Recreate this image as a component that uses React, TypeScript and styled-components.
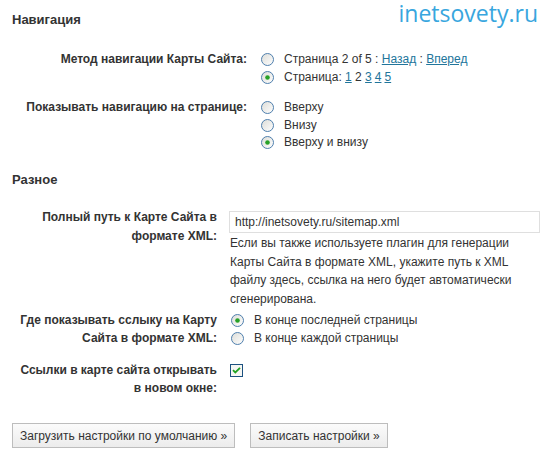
import React from "react";
import styled, { createGlobalStyle } from "styled-components";

const GlobalStyle = createGlobalStyle`
  html, body { margin: 0; padding: 0; background: #fff; }
  body {
    font-family: "Liberation Sans", Arial, sans-serif;
    font-size: 12px;
    color: #333;
  }
`;

const Page = styled.div`
  position: relative;
  width: 541px;
  height: 455px;
  overflow: hidden;
  box-sizing: border-box;
  padding: 12px 0 0 12px;
`;

const Logo = styled.div`
  position: absolute;
  top: 0;
  right: 3px;
  font-family: "Open Sans", sans-serif;
  font-size: 23px;
  line-height: 26px;
  color: #38a6de;
`;

const SectionTitle = styled.h3<{ $mt?: number; $mb: number }>`
  margin: ${(p) => p.$mt ?? 0}px 0 ${(p) => p.$mb}px;
  font-size: 13px;
  line-height: 16px;
  font-weight: bold;
  color: #333;
`;

const FormTable = styled.div`
  display: flex;
  flex-direction: column;
`;

const Row = styled.div<{ $label: number; $mt?: number }>`
  display: grid;
  grid-template-columns: ${(p) => p.$label}px 1fr;
  column-gap: 12px;
  margin-top: ${(p) => p.$mt ?? 0}px;
  align-items: start;
`;

const Label = styled.div<{ $lh: number }>`
  text-align: right;
  font-weight: bold;
  line-height: ${(p) => p.$lh}px;
  color: #333;
`;

const Options = styled.div`
  display: flex;
  flex-direction: column;
`;

const Option = styled.label`
  display: flex;
  align-items: center;
  height: 17.5px;
  line-height: 17.5px;
  white-space: nowrap;
  color: #333;
`;

const RadioBox = styled.span`
  display: inline-flex;
  width: 13px;
  height: 13px;
  margin: 0 10px 0 2px;
  flex: none;
`;

const CheckBox = styled.span`
  display: inline-flex;
  width: 13px;
  height: 13px;
  margin: 2.5px 0 0 1px;
`;

const Link = styled.a`
  color: #21759b;
  text-decoration: underline;
`;

const Gap = styled.span`
  display: inline-block;
  width: 3px;
`;

const Control = styled.div`
  display: flex;
  flex-direction: column;
`;

const TextInput = styled.input`
  box-sizing: border-box;
  width: 311px;
  height: 22px;
  margin-top: 3px;
  padding: 0 5px;
  border: 1px solid #dfdfdf;
  background: #fff;
  font-family: "Liberation Sans", Arial, sans-serif;
  font-size: 12px;
  color: #333;
  outline: none;
`;

const Description = styled.div`
  margin-top: 1.5px;
  padding-left: 1px;
  line-height: 18.5px;
  color: #333;
`;

const Buttons = styled.div`
  display: flex;
  gap: 15px;
  margin-top: 26px;
`;

const Button = styled.button`
  height: 25px;
  padding: 0 7px;
  border: 1px solid #bdbdbd;
  border-radius: 0;
  background: linear-gradient(#fbfbfb, #ececec);
  font-family: "Liberation Sans", Arial, sans-serif;
  font-size: 12px;
  color: #333;
  cursor: pointer;
`;

const Radio: React.FC<{ checked?: boolean }> = ({ checked }) => (
  <RadioBox>
    <svg width="13" height="13" viewBox="0 0 13 13">
      <defs>
        <linearGradient id="rg" x1="0" y1="0" x2="1" y2="1">
          <stop offset="0" stopColor="#dcdcd7" />
          <stop offset="1" stopColor="#ffffff" />
        </linearGradient>
      </defs>
      <circle cx="6.5" cy="6.5" r="6" fill="url(#rg)" stroke="#4f7fad" strokeWidth="1" />
      {checked && <circle cx="6.5" cy="6.5" r="2.3" fill="#27a127" />}
    </svg>
  </RadioBox>
);

const Check: React.FC = () => (
  <CheckBox>
    <svg width="13" height="13" viewBox="0 0 13 13">
      <rect x="0.5" y="0.5" width="12" height="12" fill="#f6f6f3" stroke="#1c5180" />
      <path d="M3 6.2 L5.3 8.5 L10 3.8" fill="none" stroke="#21a121" strokeWidth="1.8" />
    </svg>
  </CheckBox>
);

export default function App() {
  return (
    <>
      <GlobalStyle />
      <Page>
        <Logo>inetsovety.ru</Logo>

        <SectionTitle $mb={23}>Навигация</SectionTitle>
        <FormTable>
          <Row $label={235}>
            <Label $lh={17.5}>Метод навигации Карты Сайта:</Label>
            <Options>
              <Option>
                <Radio />
                Страница 2 of 5 :&nbsp;<Link href="#">Назад</Link>&nbsp;:&nbsp;
                <Link href="#">Вперед</Link>
              </Option>
              <Option>
                <Radio checked />
                Страница:&nbsp;<Link href="#">1</Link>&nbsp;2&nbsp;<Link href="#">3</Link>
                <Gap />
                <Link href="#">4</Link>
                <Gap />
                <Link href="#">5</Link>
              </Option>
            </Options>
          </Row>
          <Row $label={235} $mt={13}>
            <Label $lh={17.5}>Показывать навигацию на странице:</Label>
            <Options>
              <Option>
                <Radio />
                Вверху
              </Option>
              <Option>
                <Radio />
                Внизу
              </Option>
              <Option>
                <Radio checked />
                Вверху и внизу
              </Option>
            </Options>
          </Row>
        </FormTable>

        <SectionTitle $mt={20} $mb={20}>
          Разное
        </SectionTitle>
        <FormTable>
          <Row $label={205}>
            <Label $lh={19}>
              Полный путь к Карте Сайта в
              <br />
              формате XML:
            </Label>
            <Control>
              <TextInput defaultValue="http://inetsovety.ru/sitemap.xml" />
              <Description>
                Если вы также используете плагин для генерации
                <br />
                Карты Сайта в формате XML, укажите путь к XML
                <br />
                файлу здесь, ссылка на него будет автоматически
                <br />
                сгенерирована.
              </Description>
            </Control>
          </Row>
          <Row $label={205} $mt={4}>
            <Label $lh={17.5}>
              Где показывать сслыку на Карту
              <br />
              Сайта в формате XML:
            </Label>
            <Options>
              <Option>
                <Radio checked />
                В конце последней страницы
              </Option>
              <Option>
                <Radio />
                В конце каждой страницы
              </Option>
            </Options>
          </Row>
          <Row $label={205} $mt={14}>
            <Label $lh={18}>
              Ссылки в карте сайта открывать
              <br />
              в новом окне:
            </Label>
            <div>
              <Check />
            </div>
          </Row>
        </FormTable>

        <Buttons>
          <Button>Загрузить настройки по умолчанию »</Button>
          <Button>Записать настройки »</Button>
        </Buttons>
      </Page>
    </>
  );
}
